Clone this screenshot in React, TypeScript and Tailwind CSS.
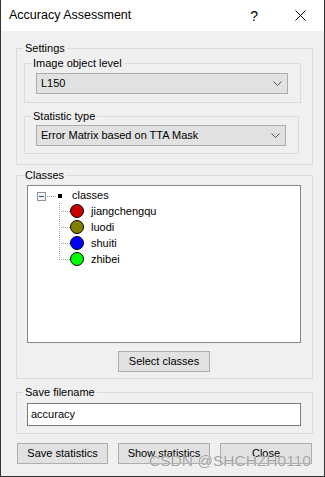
import React from "react";

function dotsH(x0: number, x1: number, y: number, key: string) {
  const out: React.ReactElement[] = [];
  for (let x = x0; x <= x1; x += 2) out.push(<rect key={key + x} x={x} y={y} width={1} height={1} fill="#a0a0a0" />);
  return out;
}
function dotsV(x: number, y0: number, y1: number, key: string) {
  const out: React.ReactElement[] = [];
  for (let y = y0; y <= y1; y += 2) out.push(<rect key={key + y} x={x} y={y} width={1} height={1} fill="#a0a0a0" />);
  return out;
}

function Combo({ text, w }: { text: string; w: string }) {
  return (
    <div className={`${w} h-[21px] bg-[#e1e1e1] border border-[#adadad] flex items-center justify-between pl-[4px] pr-[5px] text-[11px] text-black`}>
      <span>{text}</span>
      <svg width="9" height="5" viewBox="0 0 9 5">
        <polyline points="0.5,0.5 4.5,4.5 8.5,0.5" fill="none" stroke="#555" strokeWidth="1" />
      </svg>
    </div>
  );
}

function Btn({ text, w }: { text: string; w: string }) {
  return (
    <div className={`${w} h-[21px] bg-[#e1e1e1] border border-[#adadad] flex items-center justify-center text-[11px] text-black`}>
      {text}
    </div>
  );
}

function Legend({ children }: { children: React.ReactNode }) {
  return <legend className="ml-[6px] px-[2px] text-[11px] leading-[14px] text-black">{children}</legend>;
}

const items = [
  { name: "jiangchengqu", color: "#c80000" },
  { name: "luodi", color: "#808000" },
  { name: "shuiti", color: "#0000ff" },
  { name: "zhibei", color: "#00ff00" },
];

export default function App() {
  return (
    <div className="relative w-[325px] h-[477px] bg-[#f0f0f0] border-l border-r border-b border-[#333333] font-['Liberation_Sans',Arial,sans-serif] overflow-hidden">
      {/* title bar */}
      <div className="h-[31px] bg-white flex items-center">
        <span className="pl-[8px] text-[12.5px] text-black">Accuracy Assessment</span>
        <span className="ml-auto text-[14px] text-black mr-[37px] leading-none">?</span>
        <svg width="11" height="11" viewBox="0 0 11 11" className="mr-[18px]">
          <line x1="0.5" y1="0.5" x2="10.5" y2="10.5" stroke="#000" strokeWidth="1" />
          <line x1="10.5" y1="0.5" x2="0.5" y2="10.5" stroke="#000" strokeWidth="1" />
        </svg>
      </div>

      <div className="ml-[15px] mt-[10px] flex flex-col">
        {/* Settings */}
        <fieldset className="w-[297px] border border-[#dcdcdc] m-0 p-0">
          <Legend>Settings</Legend>
          <div className="pl-[7px] pt-[1px] pb-[10px] flex flex-col">
            <fieldset className="w-[277px] border border-[#dcdcdc] m-0 p-0">
              <Legend>Image object level</Legend>
              <div className="pl-[11px] pt-[3px] pb-[8px]">
                <Combo text="L150" w="w-[252px]" />
              </div>
            </fieldset>
            <fieldset className="w-[275px] mt-[6px] border border-[#dcdcdc] m-0 p-0">
              <Legend>Statistic type</Legend>
              <div className="pl-[11px] pt-[2px] pb-[7px]">
                <Combo text="Error Matrix based on TTA Mask" w="w-[250px]" />
              </div>
            </fieldset>
          </div>
        </fieldset>

        {/* Classes */}
        <fieldset className="w-[297px] mt-[3px] border border-[#dcdcdc] m-0 p-0">
          <Legend>Classes</Legend>
          <div className="pl-[10px] pt-[3px] pb-[6px] flex flex-col">
            <div className="w-[274px] h-[158px] bg-white border border-[#828790] pt-[1px] flex flex-col text-[11px] text-black">
              <div className="h-[16px] flex items-center">
                <svg width="44" height="16" viewBox="0 0 44 16" className="shrink-0">
                  <rect x="9.5" y="5.5" width="8" height="8" fill="#f2f4f8" stroke="#919191" />
                  <rect x="11" y="9" width="5" height="1" fill="#2a55a8" />
                  {dotsH(19, 27, 9, "r")}
                  <rect x="30" y="7" width="4" height="4" fill="#000" />
                </svg>
                <span>classes</span>
              </div>
              {items.map((it, i) => (
                <div key={it.name} className="h-[16px] flex items-center">
                  <svg width="42" height="16" viewBox="0 0 42 16" className="shrink-0">
                    {dotsV(31, 0, i === items.length - 1 ? 8 : 15, "v" + i)}
                    {dotsH(33, 41, 8, "h" + i)}
                  </svg>
                  <div className="w-[14px] h-[14px] rounded-full border border-black shrink-0" style={{ backgroundColor: it.color }} />
                  <span className="ml-[7px]">{it.name}</span>
                </div>
              ))}
            </div>
            <div className="mt-[8px] ml-[91px]">
              <Btn text="Select classes" w="w-[92px]" />
            </div>
          </div>
        </fieldset>

        {/* Save filename */}
        <fieldset className="w-[297px] mt-[6px] border border-[#dcdcdc] m-0 p-0">
          <Legend>Save filename</Legend>
          <div className="pl-[10px] pt-[4px] pb-[7px]">
            <div className="w-[274px] h-[23px] bg-white border border-[#7a7a7a] flex items-center pl-[3px] text-[11px] text-black">
              accuracy
            </div>
          </div>
        </fieldset>

        {/* Buttons */}
        <div className="mt-[9px] ml-[1px] flex gap-[10px]">
          <Btn text="Save statistics" w="w-[91px]" />
          <Btn text="Show statistics" w="w-[92px]" />
          <Btn text="Close" w="w-[92px]" />
        </div>
      </div>

      <div className="absolute left-[148px] top-[452px] text-[15.5px] leading-[18px] text-[#a3a3a3] [text-shadow:0_0_1px_#ffffff]">
        CSDN @SHCHZH0110
      </div>
    </div>
  );
}
